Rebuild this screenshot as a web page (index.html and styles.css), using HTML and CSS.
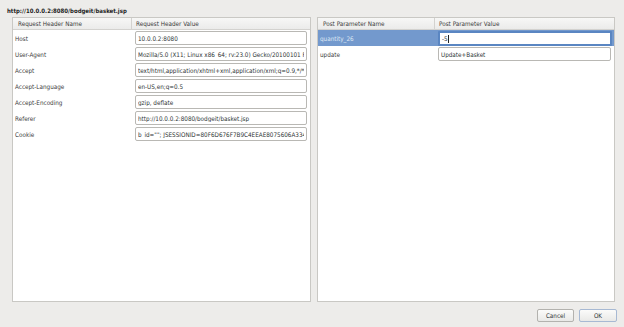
FILE: index.html
```html
<!DOCTYPE html>
<html lang="en">
<head>
  <meta charset="UTF-8">
  <meta name="viewport" content="width=device-width, initial-scale=1.0">
  <title>Edit Request</title>
  <link rel="stylesheet" href="styles.css">
</head>
<body>
  <div class="dialog">
    <div class="url">http://10.0.0.2:8080/bodgeit/basket.jsp</div>
    <div class="panes">
      <div class="pane pane-left">
        <div class="head">
          <div class="col-name">Request Header Name</div>
          <div class="col-value">Request Header Value</div>
        </div>
        <div class="row"><div class="col-name">Host</div><div class="col-value"><input type="text" value="10.0.0.2:8080"></div></div>
        <div class="row"><div class="col-name">User-Agent</div><div class="col-value"><input type="text" value="Mozilla/5.0 (X11; Linux x86_64; rv:23.0) Gecko/20100101 Firefox/23.0"></div></div>
        <div class="row"><div class="col-name">Accept</div><div class="col-value"><input type="text" value="text/html,application/xhtml+xml,application/xml;q=0.9,*/*;q=0.8"></div></div>
        <div class="row"><div class="col-name">Accept-Language</div><div class="col-value"><input type="text" value="en-US,en;q=0.5"></div></div>
        <div class="row"><div class="col-name">Accept-Encoding</div><div class="col-value"><input type="text" value="gzip, deflate"></div></div>
        <div class="row"><div class="col-name">Referer</div><div class="col-value"><input type="text" value="http://10.0.0.2:8080/bodgeit/basket.jsp"></div></div>
        <div class="row"><div class="col-name">Cookie</div><div class="col-value"><input type="text" value="b_id=&quot;&quot;; JSESSIONID=80F6D676F7B9C4EEAE8075606A3349B1"></div></div>
      </div>
      <div class="pane pane-right">
        <div class="head">
          <div class="col-name">Post Parameter Name</div>
          <div class="col-value">Post Parameter Value</div>
        </div>
        <div class="row selected"><div class="col-name">quantity_26</div><div class="col-value"><div class="edit focus">-5<span class="caret"></span></div></div></div>
        <div class="row"><div class="col-name">update</div><div class="col-value"><input type="text" value="Update+Basket"></div></div>
      </div>
    </div>
    <div class="buttons">
      <button>Cancel</button>
      <button class="ok">OK</button>
    </div>
  </div>
</body>
</html>
```

FILE: styles.css
```css
body {
  margin: 0;
  background-color: #edecea;
  font-family: "DejaVu Sans Condensed", "DejaVu Sans", sans-serif;
  font-size: 6.3px;
  color: #2e3436;
}
.dialog {
  width: 624px;
  height: 327px;
  padding-top: 6px;
  box-sizing: border-box;
}
.url {
  font-weight: bold;
  font-size: 6px;
  padding-left: 7px;
  height: 11px;
  line-height: 9px;
  color: #1e1e1e;
}
.panes {
  display: flex;
  gap: 6px;
  padding-left: 12px;
}
.pane {
  height: 285px;
  background: #fff;
  border: 1px solid #c9c8c4;
  box-sizing: border-box;
}
.pane-left {
  width: 299px;
}
.pane-right {
  width: 298px;
}
.pane-left .col-name {
  width: 119px;
}
.pane-right .col-name {
  width: 117px;
}
.head {
  display: flex;
  height: 12px;
  background: linear-gradient(#f7f7f6, #ebebea);
  border-bottom: 1px solid #d3d2cf;
  box-sizing: border-box;
  line-height: 11px;
  color: #3a3a3a;
}
.head .col-name {
  padding-left: 5px;
  border-right: 1px solid #d3d2cf;
  box-sizing: border-box;
}
.head .col-value {
  padding-left: 4px;
}
.row {
  display: flex;
  height: 16px;
  align-items: center;
}
.row .col-name {
  padding-left: 2px;
  box-sizing: border-box;
  color: #3c3c3c;
}
.col-value {
  flex: 1;
  min-width: 0;
}
.row .col-value {
  padding: 0 3px 0 3px;
}
input, .edit {
  display: block;
  width: 100%;
  height: 14px;
  box-sizing: border-box;
  border: 1px solid #b9b8b4;
  border-radius: 2px;
  padding: 0 2px;
  margin: 0;
  font-family: "DejaVu Sans Condensed", "DejaVu Sans", sans-serif;
  font-size: 6.3px;
  color: #2e3436;
  background: #fff;
  outline: none;
}
.edit {
  line-height: 12px;
}
.selected {
  background: #7399cd;
}
.selected .col-name {
  color: #dfe8f4;
}
.selected .col-value {
  padding-right: 2px;
}
.focus {
  height: 15px;
  border: 2px solid #5a86c2;
  border-radius: 1px;
  line-height: 11px;
  padding-left: 2px;
}
.caret {
  display: inline-block;
  width: 1px;
  height: 8px;
  background: #222;
  vertical-align: middle;
}
.buttons {
  display: flex;
  justify-content: flex-end;
  gap: 5px;
  padding: 7px 7px 0 0;
}
button {
  width: 37px;
  height: 13px;
  padding: 0;
  font-family: "DejaVu Sans Condensed", "DejaVu Sans", sans-serif;
  font-size: 6.3px;
  color: #2e3436;
  background: linear-gradient(#fbfbfa, #e9e9e7);
  border: 1px solid #b3b2ae;
  border-radius: 2px;
}
button.ok {
  width: 38px;
  border-color: #a7b9d3;
}
```
